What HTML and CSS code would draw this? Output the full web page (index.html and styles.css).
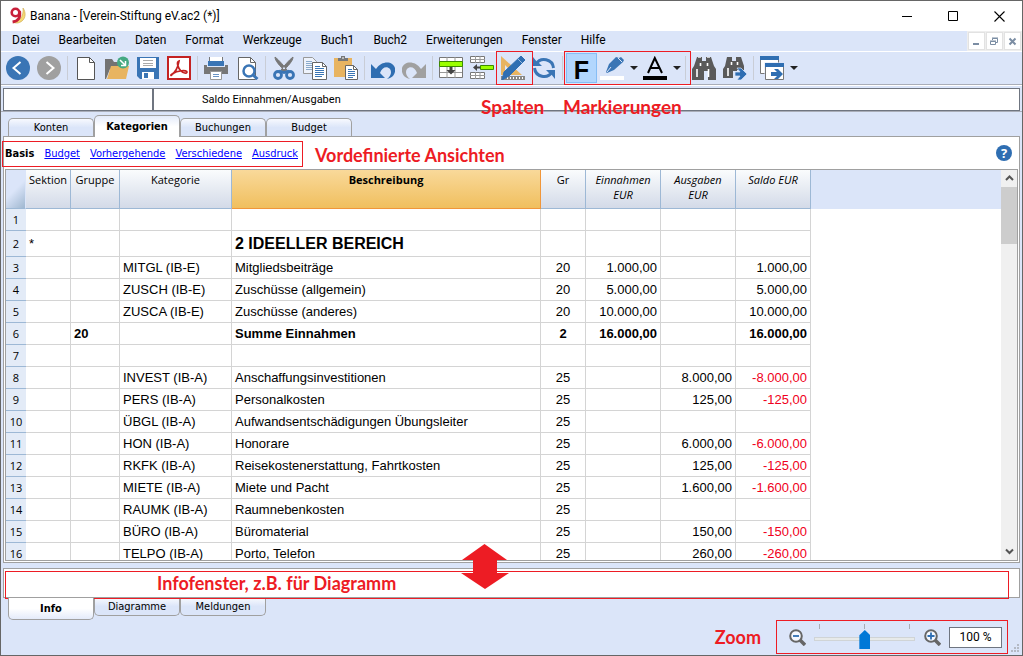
FILE: index.html
```html
<!DOCTYPE html>
<html lang="de">
<head>
<meta charset="utf-8">
<title>Banana - [Verein-Stiftung eV.ac2 (*)]</title>
<link rel="stylesheet" href="styles.css">
</head>
<body>
<div class="window">
  <header class="titlebar">
    <svg class="logo" width="18" height="18" viewBox="0 0 18 18"><path d="M14 1c3 4 3 10-1 13-3 2.500-7 2.500-9 1 6 0 11-5 10-14z" fill="#f6d976" stroke="#c9a54a" stroke-width=".6"/><circle cx="6.500" cy="5.500" r="3.800" fill="none" stroke="#c8203a" stroke-width="2.600"/><path d="M10.600 4c1 6-1 10-7 11" fill="none" stroke="#c8203a" stroke-width="2.800"/></svg>
    <h1 class="title">Banana - [Verein-Stiftung eV.ac2 (*)]</h1>
    <div class="window-buttons">
      <button aria-label="Minimieren"><svg width="11" height="11"><path d="M0 5.500h10" stroke="#000"/></svg></button>
      <button aria-label="Maximieren"><svg width="11" height="11"><path d="M.5.5h9v9h-9z" fill="none" stroke="#000"/></svg></button>
      <button aria-label="Schließen"><svg width="11" height="11"><path d="M.5.5l10 10M10.500.5l-10 10" stroke="#000" stroke-width="1.100"/></svg></button>
    </div>
  </header>

  <div class="menubar">
    <nav class="menu">
      <button>Datei</button><button>Bearbeiten</button><button>Daten</button><button>Format</button><button>Werkzeuge</button><button>Buch1</button><button>Buch2</button><button>Erweiterungen</button><button>Fenster</button><button>Hilfe</button>
    </nav>
    <div class="mdi">
      <button aria-label="Fenster minimieren"><svg width="9" height="9"><path d="M1 7h6" stroke="#7b8da3" stroke-width="2"/></svg></button>
      <button aria-label="Fenster wiederherstellen"><svg width="9" height="9"><path d="M2.500 3V1.500h5v4H6M.5 4.500h5v3h-5zM2 1h6M0 4h6" fill="none" stroke="#7b8da3"/></svg></button>
      <button aria-label="Fenster schließen"><svg width="9" height="9"><path d="M1.500 1.500l6 6M7.500 1.500l-6 6" stroke="#7b8da3" stroke-width="2"/></svg></button>
    </div>
  </div>

  <div class="toolbar">
    <button class="tool" aria-label="Zurück"><svg viewBox="0 0 24 24"><circle cx="12" cy="12" r="12" fill="#3a75b5"/><path d="M14.500 6l-7 6 7 6" fill="none" stroke="#fff" stroke-width="2"/></svg></button>
    <button class="tool" aria-label="Vorwärts"><svg viewBox="0 0 24 24"><circle cx="12" cy="12" r="12" fill="#a0a0a0"/><path d="M9.500 6l7 6-7 6" fill="none" stroke="#fff" stroke-width="2"/></svg></button>
    <span class="sep"></span>
    <button class="tool" aria-label="Neu"><svg viewBox="0 0 24 24"><path d="M3.500 1.500h12l5 5v17h-17z" fill="#fff" stroke="#555"/><path d="M15.500 1.500v5h5" fill="none" stroke="#555"/></svg></button>
    <button class="tool" aria-label="Öffnen"><svg viewBox="0 0 24 24"><path d="M0 3h7l2 3h10v7H5L1 23H0z" fill="#737373"/><path d="M6 10h18l-3 13H2z" fill="#e8b461"/><circle cx="18" cy="6.500" r="6" fill="#45a982"/><path d="M15 4l5 5M20.500 5v4.500H16" fill="none" stroke="#fff" stroke-width="1.500"/></svg></button>
    <button class="tool" aria-label="Speichern"><svg viewBox="0 0 24 24"><path d="M1 1h22v22H4l-3-3z" fill="#3a75b5"/><path d="M4 2h16v10H4zM6 16h12v7H6z" fill="#fff"/><path d="M7 4.500h10M7 7.500h10M7 9.500h10" stroke="#aaa"/><path d="M8 17h4v5H8z" fill="#3a75b5"/></svg></button>
    <button class="tool" aria-label="PDF"><svg viewBox="0 0 24 24"><path d="M1 1h22v22H1z" fill="#fff" stroke="#c42222" stroke-width="2"/><path d="M4 19c4-2 7-8 8-14-3 1-1 7 2 10 2 2 6 3 6 1 0-2-9-2-15 2-2 1-1 2 0 1" fill="none" stroke="#c42222" stroke-width="1.700"/></svg></button>
    <span class="sep"></span>
    <button class="tool" aria-label="Drucken"><svg viewBox="0 0 24 24"><path d="M0 9h3v2h18V9h3v9H0z" fill="#777"/><path d="M5.500 1v4M18.500 1v4" stroke="#777"/><path d="M6 1h12v4H6z" fill="#fff"/><path d="M4 5h16v5H4z" fill="#3a75b5"/><path d="M6.500 15.500h11v8h-11z" fill="#fff" stroke="#999"/><path d="M9 18.500h6M9 20.500h6" stroke="#6a94c4"/></svg></button>
    <button class="tool" aria-label="Vorschau"><svg viewBox="0 0 24 24"><path d="M3.500 1.500h12l5 5v17h-17z" fill="#fff" stroke="#666"/><path d="M15.500 1.500v5h5" fill="none" stroke="#666"/><circle cx="14" cy="15" r="5.500" fill="#fff" stroke="#3a75b5" stroke-width="2.500"/><path d="M18 19l4.500 4" stroke="#3a75b5" stroke-width="3"/></svg></button>
    <span class="sep"></span>
    <button class="tool" aria-label="Ausschneiden"><svg viewBox="0 0 24 24"><path d="M3 1c0 4 5 9 10 14l2-1C12 10 7 4 3 1zM21 1c0 4-5 9-10 14l-2-1C12 10 17 4 21 1z" fill="#777" stroke="#777"/><circle cx="6" cy="19" r="3.500" fill="none" stroke="#3a75b5" stroke-width="2.800"/><circle cx="18" cy="19" r="3.500" fill="none" stroke="#3a75b5" stroke-width="2.800"/><path d="M7 15l5 1.500 5-1.500" fill="none" stroke="#3a75b5" stroke-width="2.800"/></svg></button>
    <button class="tool" aria-label="Kopieren"><svg viewBox="0 0 24 24"><path d="M.5 1.500h9l4 4v12H.5z" fill="#eef3fc" stroke="#999"/><path d="M3 5.500h6M3 7.500h8M3 9.500h8M3 11.500h8M3 13.500h8" stroke="#8aaacb"/><path d="M9.500 6.500h10l4 4v13h-14z" fill="#fff" stroke="#666"/><path d="M19.500 6.500v4h4" fill="none" stroke="#666"/><path d="M12 10.500h5M12 12.500h9M12 14.500h9M12 16.500h9M12 18.500h9M12 20.500h7" stroke="#3a75b5"/></svg></button>
    <button class="tool" aria-label="Einfügen"><svg viewBox="0 0 24 24"><path d="M0 2h18v19H0z" fill="#e8b461"/><path d="M4 5V2h3V0h4v2h3v3z" fill="#777"/><path d="M8 2h2" stroke="#fff"/><path d="M11.500 9.500h8l4 4v10h-12z" fill="#fff" stroke="#666"/><path d="M19.500 9.500v4h4" fill="none" stroke="#666"/><path d="M14 13.500h4M14 15.500h7M14 17.500h7M14 19.500h7M14 21.500h5" stroke="#3a75b5"/></svg></button>
    <span class="sep"></span>
    <button class="tool" aria-label="Rückgängig"><svg viewBox="0 0 24 24"><path d="M0 8v14h14l-5-5c2-6 7-7 10-4 2 3 1 7-3 10 6-1 9-6 8-11C22 5 11 4 5 13z" fill="#2f6eb2"/></svg></button>
    <button class="tool" aria-label="Wiederholen"><svg viewBox="0 0 24 24"><path d="M24 8v14H10l5-5c-2-6-7-7-10-4-2 3-1 7 3 10-6-1-9-6-8-11C2 5 13 4 19 13z" fill="#a0a0a0"/></svg></button>
    <span class="sep"></span>
    <button class="tool" aria-label="Zeilen einfügen"><svg viewBox="0 0 24 24"><path d="M.5 1.500h23v20H.5z" fill="#fff" stroke="#777"/><path d="M8 1v21M16 1v21M1 16.500h22" stroke="#999"/><path d="M.5 5.500h23v5H.5z" fill="#9bff00" stroke="#3d8b00"/><path d="M10.500 11h3v3h3L12 18.500 7.500 14h3z" fill="#444"/></svg></button>
    <button class="tool" aria-label="Zeilen anfügen"><svg viewBox="0 0 24 24"><path d="M.5.5h14v6H.5zM.5 16.500h14v6H.5z" fill="#fff" stroke="#777"/><path d="M0 3.500h15M0 19.500h15M5.500 0v7M10 0v7M5.500 16v7M10 16v7" stroke="#999"/><path d="M10.500 9.500h13v4h-13z" fill="#9bff00" stroke="#3d8b00"/><path d="M3 11.500L7 8v2.500h3v2H7V15z" fill="#444"/></svg></button>
    <button class="tool marked" aria-label="Spalten einrichten"><svg viewBox="0 0 24 24"><path d="M0 0l21 19H0z" fill="#e8b461"/><path d="M4 9l5 5H4z" fill="#dbe5f9"/><path d="M0 20h24v4H0z" fill="#888"/><path d="M3.500 21v2M6.500 21v2M9.500 21v2M12.500 21v2M15.500 21v2M18.500 21v2M21.500 21v2" stroke="#fff"/><path d="M20 0l4 4L8 20l-7 4 2-8z" fill="#2f6eb2" stroke="#2f6eb2"/><path d="M17 3l4 4" stroke="#9cbbe0"/></svg></button>
    <button class="tool" aria-label="Neu berechnen"><svg viewBox="0 0 24 24"><path d="M4 8A9.500 9.500 0 0 1 21.500 12M20 16A9.500 9.500 0 0 1 2.500 12" fill="none" stroke="#3a75b5" stroke-width="3"/><path d="M1 1v9h9l-3-3-2-1zM23 23v-9h-9l3 3 2 1z" fill="#3a75b5"/></svg></button>
    <span class="sep"></span>
    <div class="markings">
      <button class="tool bold" aria-pressed="true">F</button>
      <button class="tool split" aria-label="Hintergrundfarbe"><svg viewBox="0 0 24 24"><path d="M0 20h24v4H0z" fill="#fff"/><path d="M6 16l3-8 7-7 3 1 2-1 3 3-1 2-9 8-7 3z" fill="#3a75b5"/><path d="M18 2l4 4M7 16l4-5" stroke="#dbe5f9"/></svg><i class="drop"></i></button>
      <button class="tool split" aria-label="Textfarbe"><svg viewBox="0 0 24 24"><path d="M0 20h24v4H0z" fill="#000"/><path d="M5 17L11.800 2 19 17M7.500 12h9" fill="none" stroke="#000" stroke-width="2"/></svg><i class="drop"></i></button>
      <span class="sep"></span>
    </div>
    <button class="tool" aria-label="Suchen"><svg viewBox="0 0 24 24"><path d="M0 24V13l2-3 3-9h5v4h4V1h5l3 9 2 3v11h-8v-9h-4v9z" fill="#5a5a5a"/><path d="M5 13v8M16.500 13v8M8.500 7v3M15.500 7v3" stroke="#fff" stroke-width="1.600"/><path d="M6 1.500h3M15 1.500h3" stroke="#ccc"/></svg></button>
    <button class="tool" aria-label="Weitersuchen"><svg viewBox="0 0 24 24"><path d="M0 22V13l2-3 2-9h5v4h4V1h5l3 9v4h-7v1h-4v7z" fill="#5a5a5a"/><path d="M5 12v8M8.500 6v3M14.500 6v3" stroke="#fff" stroke-width="1.600"/><path d="M12 16h5l-3-4h4l6 6-6 6h-4l3-4h-5z" fill="#2f6eb2" stroke="#dbe5f9" stroke-width=".7"/></svg></button>
    <span class="sep"></span>
    <button class="tool split" aria-label="Fenster wechseln"><svg viewBox="0 0 24 24"><path d="M.5.500h18v17H.5z" fill="#fff" stroke="#777"/><path d="M0 0h19v4H0z" fill="#2f6eb2"/><path d="M4.500 6.500h20v18h-20z" fill="#dbe5f9"/><path d="M5.500 7.500h18v16h-18z" fill="#fff" stroke="#777"/><path d="M5 7h19v4H5zM11 16h6l-3-3h4l5 5-5 5h-4l3-3h-6z" fill="#2f6eb2"/></svg><i class="drop"></i></button>
  </div>

  <div class="infobar">
    <input class="cellref" aria-label="Zelle">
    <output class="celltext">Saldo Einnahmen/Ausgaben</output>
    <span class="note note-columns">Spalten</span>
    <span class="note note-marks">Markierungen</span>
  </div>

  <div class="tabs">
    <button class="tab">Konten</button><button class="tab active">Kategorien</button><button class="tab">Buchungen</button><button class="tab">Budget</button>
  </div>

  <main class="pane">
    <div class="viewbar">
      <nav class="views"><b>Basis</b><a href="#budget">Budget</a><a href="#vorher">Vorhergehende</a><a href="#verschiedene">Verschiedene</a><a href="#ausdruck">Ausdruck</a></nav>
      <span class="note">Vordefinierte Ansichten</span>
      <button class="help" aria-label="Hilfe">?</button>
    </div>
    <div class="gridbox">
      <div class="gridview">
        <table class="grid">
          <colgroup><col class="c-num"><col class="c-sec"><col class="c-grp"><col class="c-cat"><col class="c-desc"><col class="c-gr"><col class="c-amt"><col class="c-amt"><col class="c-amt"></colgroup>
          <thead><tr><th class="corner"></th><th>Sektion</th><th>Gruppe</th><th>Kategorie</th><th class="current">Beschreibung</th><th>Gr</th><th class="it">Einnahmen<br>EUR</th><th class="it">Ausgaben<br>EUR</th><th class="it">Saldo EUR</th></tr></thead>
          <tbody>
            <tr><th>1</th><td></td><td></td><td></td><td></td><td></td><td></td><td></td><td></td></tr>
            <tr class="heading"><th>2</th><td>*</td><td></td><td></td><td>2 IDEELLER BEREICH</td><td></td><td></td><td></td><td></td></tr>
            <tr><th>3</th><td></td><td></td><td>MITGL (IB-E)</td><td>Mitgliedsbeiträge</td><td>20</td><td>1.000,00</td><td></td><td>1.000,00</td></tr>
            <tr><th>4</th><td></td><td></td><td>ZUSCH (IB-E)</td><td>Zuschüsse (allgemein)</td><td>20</td><td>5.000,00</td><td></td><td>5.000,00</td></tr>
            <tr><th>5</th><td></td><td></td><td>ZUSCA (IB-E)</td><td>Zuschüsse (anderes)</td><td>20</td><td>10.000,00</td><td></td><td>10.000,00</td></tr>
            <tr class="sum"><th>6</th><td></td><td>20</td><td></td><td>Summe Einnahmen</td><td>2</td><td>16.000,00</td><td></td><td>16.000,00</td></tr>
            <tr><th>7</th><td></td><td></td><td></td><td></td><td></td><td></td><td></td><td></td></tr>
            <tr><th>8</th><td></td><td></td><td>INVEST (IB-A)</td><td>Anschaffungsinvestitionen</td><td>25</td><td></td><td>8.000,00</td><td class="neg">-8.000,00</td></tr>
            <tr><th>9</th><td></td><td></td><td>PERS (IB-A)</td><td>Personalkosten</td><td>25</td><td></td><td>125,00</td><td class="neg">-125,00</td></tr>
            <tr><th>10</th><td></td><td></td><td>ÜBGL (IB-A)</td><td>Aufwandsentschädigungen Übungsleiter</td><td>25</td><td></td><td></td><td></td></tr>
            <tr><th>11</th><td></td><td></td><td>HON (IB-A)</td><td>Honorare</td><td>25</td><td></td><td>6.000,00</td><td class="neg">-6.000,00</td></tr>
            <tr><th>12</th><td></td><td></td><td>RKFK (IB-A)</td><td>Reisekostenerstattung, Fahrtkosten</td><td>25</td><td></td><td>125,00</td><td class="neg">-125,00</td></tr>
            <tr><th>13</th><td></td><td></td><td>MIETE (IB-A)</td><td>Miete und Pacht</td><td>25</td><td></td><td>1.600,00</td><td class="neg">-1.600,00</td></tr>
            <tr><th>14</th><td></td><td></td><td>RAUMK (IB-A)</td><td>Raumnebenkosten</td><td>25</td><td></td><td></td><td></td></tr>
            <tr><th>15</th><td></td><td></td><td>BÜRO (IB-A)</td><td>Büromaterial</td><td>25</td><td></td><td>150,00</td><td class="neg">-150,00</td></tr>
            <tr><th>16</th><td></td><td></td><td>TELPO (IB-A)</td><td>Porto, Telefon</td><td>25</td><td></td><td>260,00</td><td class="neg">-260,00</td></tr>
          </tbody>
        </table>
        <div class="filler"></div>
      </div>
      <div class="scrollbar">
        <button aria-label="Nach oben"><svg width="9" height="7"><path d="M1 5l3.500-3.500L8 5" fill="none" stroke="#555" stroke-width="2"/></svg></button>
        <div class="thumb"></div>
        <button aria-label="Nach unten"><svg width="9" height="7"><path d="M1 1.500L4.500 5 8 1.500" fill="none" stroke="#555" stroke-width="2"/></svg></button>
      </div>
    </div>
  </main>

  <section class="infopane">
    <div class="infoframe"><span class="note">Infofenster, z.B. für Diagramm</span></div>
    <svg class="resize-arrow" width="48" height="46" viewBox="0 0 48 46"><path d="M23.500 0L46 16H36v13h12L24 45 0 29h12V16H1z" fill="#ed1c24"/></svg>
  </section>

  <footer class="bottom">
    <div class="tabs lower">
      <button class="tab active">Info</button><button class="tab">Diagramme</button><button class="tab">Meldungen</button>
    </div>
    <div class="statusbar">
      <span class="note">Zoom</span>
      <div class="zoombox">
        <button aria-label="Verkleinern"><svg width="17" height="17"><path d="M11 11l5 5" stroke="#666" stroke-width="3.500"/><circle cx="7" cy="7" r="5.800" fill="#f5f8ff" stroke="#666" stroke-width="2"/><path d="M4 7h6" stroke="#2f6eb2" stroke-width="1.800"/></svg></button>
        <div class="slider"><div class="ticks"><i></i><i></i><i></i></div><input type="range" min="0" max="100" value="50" aria-label="Zoom"></div>
        <button aria-label="Vergrößern"><svg width="17" height="17"><path d="M11 11l5 5" stroke="#666" stroke-width="3.500"/><circle cx="7" cy="7" r="5.800" fill="#f5f8ff" stroke="#666" stroke-width="2"/><path d="M3.500 7h7M7 3.500v7" stroke="#2f6eb2" stroke-width="1.800"/></svg></button>
        <input class="percent" type="text" value="100 %" aria-label="Zoomfaktor">
      </div>
      <svg class="grip" width="9" height="9"><path d="M6 0h2v2H6zM6 3h2v2H6zM6 6h2v2H6zM3 3h2v2H3zM3 6h2v2H3zM0 6h2v2H0z" fill="#b4b9c4"/></svg>
    </div>
  </footer>
</div>
</body>
</html>
```
FILE: styles.css
```css
* { box-sizing: border-box; }
body { margin: 0; background: #dbe5f9; font: 11px/16px "Open Sans", sans-serif; color: #000; }
button, input { font: inherit; color: inherit; margin: 0; padding: 0; border: 0; background: none; border-radius: 0; }
svg { display: block; }

.window { display: flex; flex-direction: column; height: 100vh; min-width: 820px; border: 1px solid #666; background: #dbe5f9; overflow: hidden; }
.note { font: bold 18px/22px Lato, sans-serif; color: #ed1c24; white-space: nowrap; }

.titlebar { display: flex; align-items: center; height: 30px; flex: none; background: #fff; padding-left: 8px; }
.title { margin: 0 0 0 3px; font: 12px/16px Roboto, sans-serif; flex: 1; }
.window-buttons { display: flex; }
.window-buttons button { width: 46px; height: 29px; display: flex; align-items: center; justify-content: center; }

.menubar { display: flex; justify-content: space-between; height: 21px; flex: none; border-bottom: 1px solid #fff; }
.menu { display: flex; align-items: center; gap: 19px; padding: 0 0 2px 11px; font: 12px/16px Roboto, sans-serif; }
.mdi { display: flex; gap: 1px; padding: 1px; background: #eee; }
.mdi button { width: 17px; height: 18px; border: 1px solid #e2e2e2; background: #fff; display: flex; align-items: center; justify-content: center; }

.toolbar { display: flex; flex: none; height: 33px; padding-left: 2px; border-bottom: 1px solid #a9adb8; }
.tool { position: relative; display: flex; align-items: center; width: 31px; height: 32px; padding: 0 4px 0 3px; flex: none; }
.tool svg { width: 24px; height: 24px; flex: none; }
.sep { width: 1px; height: 24px; margin: 4px 3px 0 2px; background: #c9cdd6; flex: none; }
.split { width: 43px; gap: 6px; }
.drop { border: 4px solid transparent; border-top-color: #222; border-bottom: 0; }
.marked::after, .markings::after { content: ""; position: absolute; inset: -1px -2px -1px -2px; border: 1px solid #ed1c24; pointer-events: none; }
.marked::after { right: -4px; }
.markings { position: relative; display: flex; }
.bold { justify-content: center; height: 30px; margin-top: 1px; border: 1px solid #86bdf5; background: #b2d6fd; font: bold 25px/28px "Liberation Sans", Arial, sans-serif; padding: 3px 0 0; }

.infobar { position: relative; display: flex; flex: none; height: 27px; padding: 2px 2px 2px; border-bottom: 1px solid #a9adb8; border-top: 1px solid #fff; }
.cellref { width: 151px; height: 23px; border: 1px solid #6f7580; border-right-width: 2px; background: #fff; }
.celltext { flex: 1; height: 23px; border: 1px solid #6f7580; border-left: 0; background: #fff; padding-left: 48px; font: 11px/21px Roboto, sans-serif; }
.note-columns, .note-marks { position: absolute; top: 10px; font-size: 19px; }
.note-columns { left: 480px; }
.note-marks { left: 562px; }

.tabs { display: flex; align-items: flex-end; flex: none; height: 24px; padding-left: 7px; font-family: "DejaVu Sans Condensed", "DejaVu Sans", sans-serif; }
.tab { width: 86px; height: 18px; border: 1px solid #a0a0a0; border-bottom: 0; border-radius: 5px 5px 0 0; background: linear-gradient(#f7f9fe, #dbe5f9 50%); }
.tab.active { height: 22px; margin-bottom: -1px; background: linear-gradient(#e4ebfa, #fff 50%); font-weight: bold; z-index: 1; }

.pane { display: flex; flex-direction: column; flex: 1; min-height: 0; margin: 0 2px; border: 1px solid #a0a0a0; background: #fff; padding: 0 1px; }
.viewbar { display: flex; align-items: center; flex: none; height: 32px; font-family: "DejaVu Sans Condensed", "DejaVu Sans", sans-serif; padding-right: 6px; }
.views { display: flex; gap: 10px; align-items: center; height: 26px; margin: 2px 12px 0 -3px; padding: 0 4px 0 2px; border: 1px solid #ed1c24; }
.views a { color: #00f; }
.viewbar .note { margin-top: 4px; flex: 1; }
.help { width: 16px; height: 16px; border-radius: 50%; background: #2f6eb2; color: #fff; font: bold 13px/16px "Open Sans", sans-serif; }

.gridbox { display: flex; flex: 1; min-height: 0; border: 1px solid #a0a0a0; margin-bottom: 1px; }
.gridview { display: flex; flex: 1; min-width: 0; overflow: hidden; align-items: flex-start; }
.filler { flex: 1; height: 39px; background: #dbe5f9; }
.grid { table-layout: fixed; width: 805px; flex: none; border-collapse: separate; border-spacing: 0; font: 13px/18px "Liberation Sans", Arial, sans-serif; }
.c-num { width: 20px; } .c-sec, .c-gr { width: 45px; } .c-grp { width: 49px; } .c-cat { width: 112px; } .c-desc { width: 309px; } .c-amt { width: 75px; }
.grid thead th { height: 39px; padding: 2px 0 0; vertical-align: top; font: 11px/15px "Open Sans", sans-serif; background: linear-gradient(#fafcfd, #d3dae8); border-right: 1px solid #9db8d5; border-bottom: 1px solid #9db8d5; }
.grid thead .corner { background: linear-gradient(135deg, #dbe5f9 50%, #9fb7d0); border-right-color: #dbe5f9; }
.grid thead .current { font-weight: bold; background: linear-gradient(#f9d99a, #f0bf5e); border-color: #f0963a; }
.grid thead .it { font-style: italic; }
.grid tbody th { height: 22px; padding: 0; background: #e3ebf7; border-bottom: 1px solid #9db8d5; font: 11px/16px "Open Sans", sans-serif; }
.grid td { height: 22px; padding: 0 3px; border-right: 1px solid #d4d4d4; border-bottom: 1px solid #d4d4d4; white-space: nowrap; }
.grid td:nth-child(6) { text-align: center; }
.grid td:nth-child(n+7) { text-align: right; }
.heading th, .grid .heading td { height: 26px; }
.heading td:nth-child(5) { font-size: 16px; font-weight: bold; }
.sum td { font-weight: bold; }
.grid .neg { color: #f00020; }
.scrollbar { display: flex; flex-direction: column; width: 16px; background: #f0f0f0; }
.scrollbar button { height: 17px; display: flex; align-items: center; justify-content: center; }
.scrollbar .thumb { height: 57px; background: #cdcdcd; margin-bottom: auto; }

.infopane { position: relative; flex: none; height: 30px; margin: 5px 2px 0; border: 1px solid #a0a0a0; background: #fff; padding: 2px 10px 0 1px; }
.infoframe { height: 28px; border: 1px solid #ed1c24; padding: 0 0 0 151px; }
.infopane .note { display: block; }
.resize-arrow { position: absolute; left: 457px; top: -25px; }

.bottom { flex: none; height: 57px; }
.lower { align-items: flex-start; height: 22px; }
.lower .tab { height: 18px; border: 1px solid #a0a0a0; border-top: 0; border-radius: 0 0 5px 5px; }
.lower .tab.active { height: 22px; margin: 0; background: linear-gradient(#fff 50%, #e4ebfa); }
.statusbar { display: flex; align-items: center; justify-content: flex-end; height: 34px; }
.statusbar .note { margin-right: 15px; }
.zoombox { display: flex; align-items: center; width: 232px; height: 34px; border: 1px solid #ed1c24; padding: 0 5px 0 12px; justify-content: space-between; }
.slider { position: relative; width: 101px; height: 26px; }
.ticks { display: flex; justify-content: space-between; padding: 0 5px; }
.ticks i { width: 1px; height: 5px; background: #a8acb4; }
.slider input { display: block; appearance: none; width: 100%; height: 20px; }
.slider input::-webkit-slider-runnable-track { height: 4px; background: #e7eaea; border: 1px solid #d0d4d6; }
.slider input::-webkit-slider-thumb { appearance: none; width: 11px; height: 19px; margin-top: -8px; background: #0078d7; clip-path: polygon(50% 0, 100% 28%, 100% 100%, 0 100%, 0 28%); }
.percent { width: 53px; height: 21px; border: 1px solid #6f7580; background: #fff; text-align: center; font: 12px/19px Roboto, sans-serif; }
.grip { align-self: flex-end; margin: 0 2px 1px 3px; }
```
